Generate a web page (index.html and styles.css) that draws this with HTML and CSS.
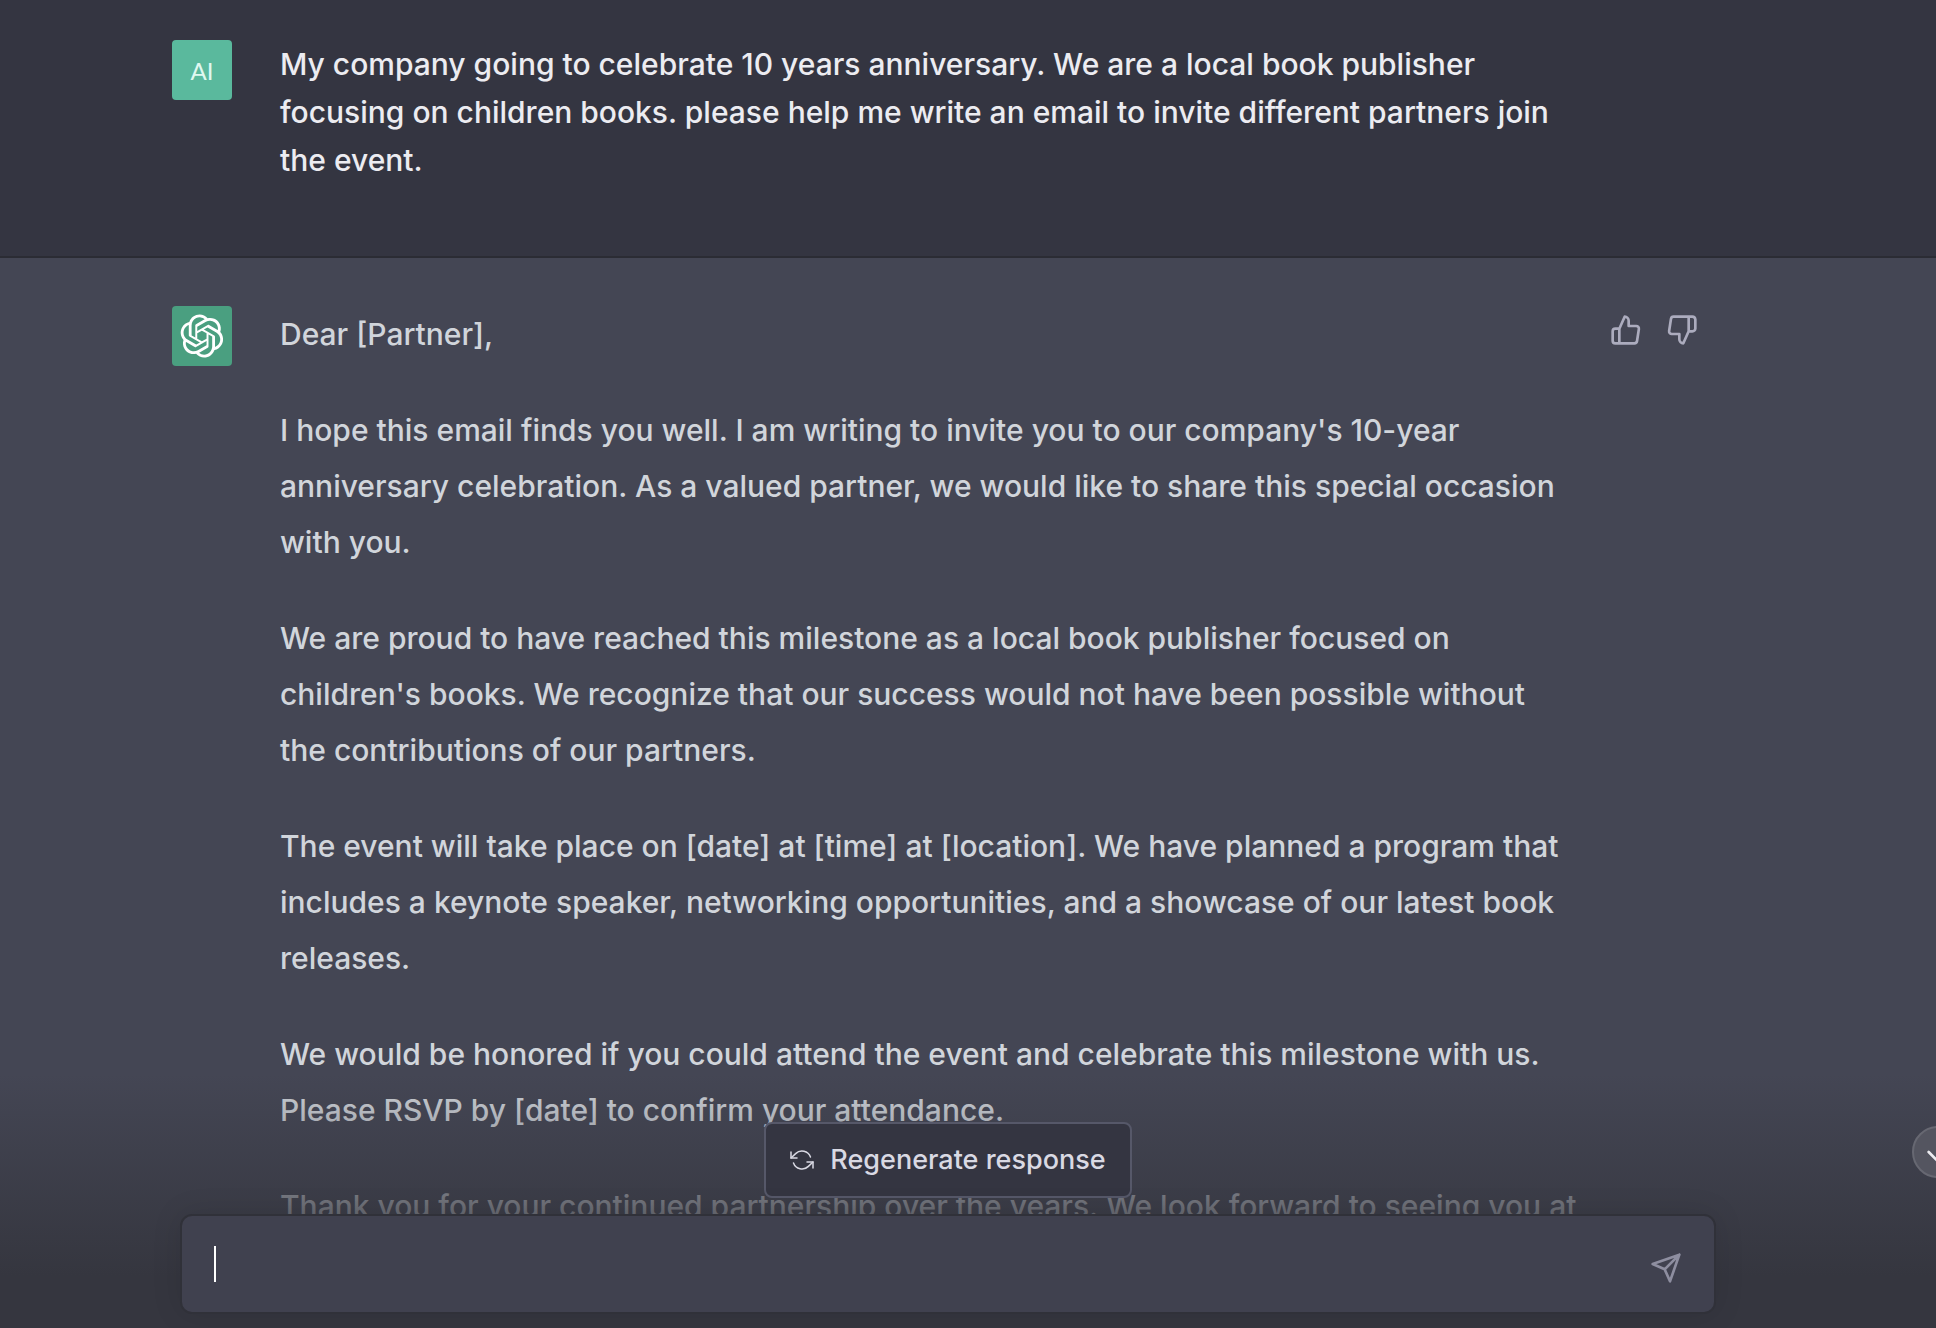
FILE: index.html
```html
<!DOCTYPE html>
<html lang="en">
<head>
<meta charset="utf-8">
<title>Chat</title>
<link rel="stylesheet" href="styles.css">
</head>
<body>
<main class="chat">
  <div class="thread">
    <article class="message message-user">
      <div class="message-inner">
        <div class="avatar avatar-user">AI</div>
        <div class="message-text">
          <p>My company going to celebrate 10 years anniversary. We are a local book publisher focusing on children books. please help me write an email to invite different partners join the event.</p>
        </div>
      </div>
    </article>
    <article class="message message-assistant">
      <div class="message-inner">
        <div class="avatar avatar-assistant">
          <svg class="logo" viewBox="0 0 41 41" fill="currentColor" aria-hidden="true"><path d="M37.5324 16.8707C37.9808 15.5241 38.1363 14.0974 37.9886 12.6859C37.8409 11.2744 37.3934 9.91076 36.676 8.68622C35.6126 6.83404 33.9882 5.3676 32.0373 4.4985C30.0864 3.62941 27.9098 3.40259 25.8215 3.85078C24.8796 2.7893 23.7219 1.94125 22.4257 1.36341C21.1295 0.785575 19.7249 0.491269 18.3058 0.500197C16.1708 0.495044 14.0893 1.16803 12.3614 2.42214C10.6335 3.67624 9.34853 5.44666 8.6917 7.47815C7.30085 7.76286 5.98686 8.3414 4.8377 9.17505C3.68854 10.0087 2.73073 11.0782 2.02839 12.312C0.956464 14.1591 0.498905 16.2988 0.721698 18.4228C0.944492 20.5467 1.83612 22.5449 3.268 24.1293C2.81966 25.4759 2.66413 26.9026 2.81182 28.3141C2.95951 29.7256 3.40701 31.0892 4.12437 32.3138C5.18791 34.1659 6.8123 35.6322 8.76321 36.5013C10.7141 37.3704 12.8907 37.5973 14.9789 37.1492C15.9208 38.2107 17.0786 39.0587 18.3747 39.6366C19.6709 40.2144 21.0755 40.5087 22.4946 40.4998C24.6307 40.5054 26.7133 39.8321 28.4418 38.5772C30.1704 37.3223 31.4556 35.5506 32.1119 33.5179C33.5027 33.2332 34.8167 32.6547 35.9659 31.821C37.115 30.9874 38.0728 29.9178 38.7752 28.684C39.8458 26.8371 40.3023 24.6979 40.0789 22.5748C39.8556 20.4517 38.9639 18.4544 37.5324 16.8707ZM22.4978 37.8849C20.7443 37.8874 19.0459 37.2733 17.6994 36.1501C17.7601 36.117 17.8666 36.0586 17.936 36.0161L25.9004 31.4156C26.1003 31.3019 26.2663 31.137 26.3813 30.9378C26.4964 30.7386 26.5563 30.5124 26.5549 30.2825V19.0542L29.9213 20.998C29.9389 21.0068 29.9541 21.0198 29.9656 21.0359C29.977 21.052 29.9842 21.0707 29.9867 21.0902V30.3889C29.9842 32.375 29.1946 34.2791 27.7909 35.6841C26.3872 37.0892 24.4838 37.8806 22.4978 37.8849ZM6.39227 31.0064C5.51397 29.4888 5.19742 27.7107 5.49804 25.9832C5.55718 26.0187 5.66048 26.0818 5.73461 26.1244L13.699 30.7248C13.8975 30.8408 14.1233 30.902 14.3532 30.902C14.583 30.902 14.8088 30.8408 15.0073 30.7248L24.731 25.1103V28.9979C24.7321 29.0177 24.7283 29.0376 24.7199 29.0556C24.7115 29.0736 24.6988 29.0893 24.6829 29.1012L16.6317 33.7497C14.9096 34.7416 12.8643 35.0097 10.9447 34.4954C9.02506 33.9811 7.38785 32.7263 6.39227 31.0064ZM4.29707 13.6194C5.17156 12.0998 6.55279 10.9364 8.19885 10.3327C8.19885 10.4013 8.19491 10.5228 8.19491 10.6071V19.808C8.19351 20.0378 8.25334 20.2638 8.36823 20.4629C8.48312 20.6619 8.64893 20.8267 8.84863 20.9404L18.5723 26.5542L15.206 28.4979C15.1894 28.5089 15.1703 28.5155 15.1505 28.5173C15.1307 28.5191 15.1107 28.516 15.0924 28.5082L7.04046 23.8557C5.32135 22.8601 4.06716 21.2235 3.55289 19.3046C3.03862 17.3858 3.30624 15.3413 4.29707 13.6194ZM31.955 20.0556L22.2312 14.4411L25.5976 12.4981C25.6142 12.4872 25.6333 12.4805 25.6531 12.4787C25.6729 12.4769 25.6928 12.4801 25.7111 12.4879L33.7631 17.1364C34.9967 17.849 36.0017 18.8982 36.6606 20.1613C37.3194 21.4244 37.6047 22.849 37.4832 24.2684C37.3617 25.6878 36.8382 27.0432 35.9743 28.1759C35.1103 29.3086 33.9415 30.1717 32.6047 30.6641C32.6047 30.5947 32.6047 30.4733 32.6047 30.3889V21.188C32.6066 20.9586 32.5474 20.7328 32.4332 20.5338C32.319 20.3348 32.154 20.1698 31.955 20.0556ZM35.3055 15.0128C35.2464 14.9765 35.1431 14.9142 35.069 14.8717L27.1045 10.2712C26.906 10.1554 26.6803 10.0943 26.4504 10.0943C26.2206 10.0943 25.9948 10.1554 25.7963 10.2712L16.0726 15.8858V11.9982C16.0715 11.9783 16.0753 11.9585 16.0837 11.9405C16.0921 11.9225 16.1048 11.9068 16.1207 11.8949L24.1719 7.25025C25.4053 6.53903 26.8158 6.19376 28.2383 6.25482C29.6608 6.31589 31.0364 6.78077 32.2044 7.59508C33.3723 8.40939 34.2842 9.53945 34.8334 10.8531C35.3826 12.1667 35.5464 13.6095 35.3055 15.0128ZM14.2424 21.9419L10.8752 19.9981C10.8576 19.9893 10.8423 19.9763 10.8309 19.9602C10.8195 19.9441 10.8122 19.9254 10.8098 19.9058V10.6071C10.8107 9.18295 11.2173 7.78848 11.9819 6.58696C12.7466 5.38544 13.8377 4.42659 15.1275 3.82264C16.4173 3.21869 17.8524 2.99464 19.2649 3.1767C20.6775 3.35876 22.0089 3.93941 23.1034 4.85067C23.0427 4.88379 22.937 4.94215 22.8668 4.98473L14.9024 9.58517C14.7025 9.69878 14.5366 9.86356 14.4215 10.0626C14.3065 10.2616 14.2466 10.4877 14.2479 10.7175L14.2424 21.9419ZM16.071 17.9991L20.4018 15.4978L24.7325 17.9975V22.9985L20.4018 25.4983L16.071 22.9985V17.9991Z"/></svg>
        </div>
        <div class="message-text">
          <p>Dear [Partner],</p>
          <p>I hope this email finds you well. I am writing to invite you to our company's 10-year anniversary celebration. As a valued partner, we would like to share this special occasion with you.</p>
          <p>We are proud to have reached this milestone as a local book publisher focused on children's books. We recognize that our success would not have been possible without the&nbsp;contributions of our partners.</p>
          <p>The event will take place on [date] at [time] at [location]. We have planned a program that includes a keynote speaker, networking opportunities, and a showcase of our latest book releases.</p>
          <p>We would be honored if you could attend the event and celebrate this milestone with us. Please RSVP by [date] to confirm your attendance.</p>
          <p>Thank you for your continued partnership over the years. We look forward to seeing you at</p>
        </div>
        <div class="feedback">
          <button class="icon-button" type="button" aria-label="Good response">
            <svg class="icon" viewBox="0 0 24 24" aria-hidden="true"><path d="M14 9V5a3 3 0 0 0-3-3l-4 9v11h11.28a2 2 0 0 0 2-1.7l1.38-9a2 2 0 0 0-2-2.3zM7 22H4a2 2 0 0 1-2-2v-7a2 2 0 0 1 2-2h3"/></svg>
          </button>
          <button class="icon-button" type="button" aria-label="Bad response">
            <svg class="icon" viewBox="0 0 24 24" aria-hidden="true"><path d="M10 15v4a3 3 0 0 0 3 3l4-9V2H5.72a2 2 0 0 0-2 1.7l-1.38 9a2 2 0 0 0 2 2.3zm7-13h2.67A2.31 2.31 0 0 1 22 4v7a2.31 2.31 0 0 1-2.33 2H17"/></svg>
          </button>
        </div>
      </div>
    </article>
  </div>

  <button class="scroll-down" type="button" aria-label="Scroll to bottom">
    <svg class="icon" viewBox="0 0 24 24" aria-hidden="true"><path d="M12 5v14M19 12l-7 7-7-7"/></svg>
  </button>

  <footer class="footer">
    <button class="regenerate" type="button">
      <svg class="icon icon-small" viewBox="0 0 24 24" aria-hidden="true"><path d="M1 4v6h6M23 20v-6h-6"/><path d="M20.49 9A9 9 0 0 0 5.64 5.64L1 10m22 4l-4.64 4.36A9 9 0 0 1 3.51 15"/></svg>
      Regenerate response
    </button>
    <form class="composer">
      <span class="caret"></span>
      <input class="prompt" type="text" aria-label="Message">
      <button class="icon-button send" type="button" aria-label="Send message">
        <svg class="icon" viewBox="0 0 24 24" aria-hidden="true"><path d="M22 2L11 13M22 2l-7 20-4-9-9-4z"/></svg>
      </button>
    </form>
  </footer>
</main>
</body>
</html>
```
FILE: styles.css
```css
* {
  box-sizing: border-box;
}

body {
  margin: 0;
  background: #444654;
  font-family: Inter, "Liberation Sans", sans-serif;
  font-weight: 500;
}

button {
  border: 0;
  background: none;
  font: inherit;
  color: inherit;
}

p {
  margin: 0;
}

.chat {
  position: relative;
  height: 100vh;
  overflow: hidden;
}

.message {
  padding: 48px 56px 48px 0;
}

.message-user {
  padding-top: 40px;
  padding-bottom: 72px;
  border-bottom: 2px solid #2b2c34;
  background: #343541;
  color: #ececf1;
}

.message-assistant {
  color: #d1d5db;
}

.message-inner {
  display: flex;
  gap: 48px;
  max-width: 1536px;
  margin: 0 auto;
}

.avatar {
  display: flex;
  flex: none;
  align-items: center;
  justify-content: center;
  width: 60px;
  height: 60px;
  border-radius: 4px;
  color: #fff;
}

.avatar-user {
  background: #5ab99d;
  color: #e0f8f0;
  font-family: Lato, sans-serif;
  font-size: 24px;
  font-weight: 400;
}

.avatar-assistant {
  background: #4a9f80;
}

.logo {
  width: 44px;
  height: 44px;
}

.message-text {
  display: flex;
  flex: 0 1 1312px;
  flex-direction: column;
  gap: 40px;
  font-size: 30px;
  line-height: 56px;
}

.message-user .message-text {
  line-height: 48px;
}

.feedback {
  display: flex;
  flex: none;
  gap: 8px;
  align-self: flex-start;
  margin-left: -38px;
  color: #acacbe;
}

.icon-button {
  display: flex;
  padding: 8px;
}

.icon {
  width: 32px;
  height: 32px;
  fill: none;
  stroke: currentColor;
  stroke-width: 2;
  stroke-linecap: round;
  stroke-linejoin: round;
}

.icon-small {
  width: 24px;
  height: 24px;
  stroke-width: 1.5;
}

.scroll-down {
  position: absolute;
  right: -28px;
  bottom: 150px;
  z-index: 1;
  display: flex;
  align-items: center;
  justify-content: center;
  width: 52px;
  height: 52px;
  padding: 0;
  border: 2px solid #676872;
  border-radius: 50%;
  background: #545560;
  color: #ececf1;
}

.footer {
  position: absolute;
  right: 0;
  bottom: 0;
  left: 0;
  display: flex;
  flex-direction: column;
  align-items: center;
  gap: 16px;
  padding: 48px 40px 14px 0;
  background: linear-gradient(180deg, rgba(53, 54, 63, 0), #35363f 202px);
  pointer-events: none;
}

.footer > * {
  pointer-events: auto;
}

.regenerate {
  display: flex;
  align-items: center;
  gap: 16px;
  padding: 16px 24px;
  border: 2px solid #565869;
  border-radius: 8px;
  background: #343541;
  color: #d9d9e3;
  font-size: 27px;
  line-height: 40px;
}

.composer {
  display: flex;
  align-items: center;
  width: 100%;
  max-width: 1536px;
  height: 100px;
  padding: 0 24px 0 32px;
  border: 2px solid #303139;
  border-radius: 12px;
  background: #40414f;
  box-shadow: 0 0 30px rgba(0, 0, 0, 0.1);
}

.caret {
  width: 2px;
  height: 36px;
  background: #fff;
}

.prompt {
  flex: 1;
  min-width: 0;
  padding: 0;
  border: 0;
  outline: 0;
  background: none;
  color: #fff;
  font: inherit;
  font-size: 30px;
  line-height: 48px;
}

.send {
  margin-top: 8px;
  color: #8e8ea0;
}
```
